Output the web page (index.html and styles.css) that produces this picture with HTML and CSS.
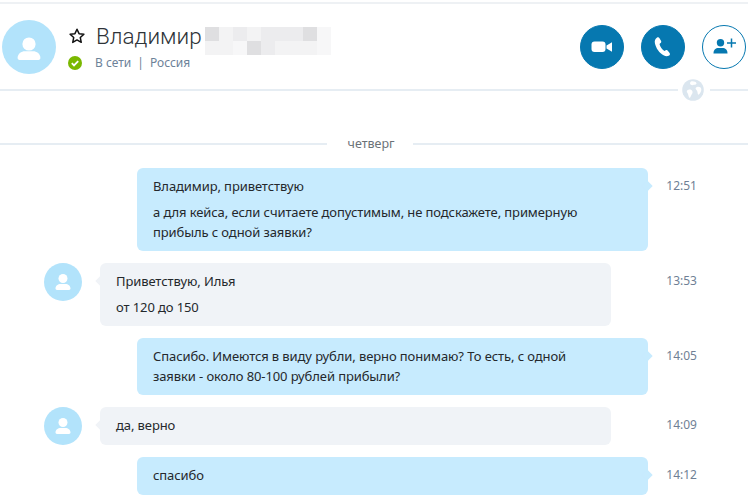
FILE: index.html
```html
<!DOCTYPE html>
<html lang="ru">
<head>
<meta charset="utf-8">
<title>Чат</title>
<link rel="stylesheet" href="styles.css">
</head>
<body>
<div class="page">
  <header class="head">
    <div class="avatar-big">
      <svg viewBox="0 0 54 54" width="54" height="54"><circle cx="27" cy="24" r="6.6" fill="#fff"/><path d="M17.5 40c-1.2 0-1.9-.8-1.9-1.9 0-4.6 3.6-6.9 7.4-6.9h8c3.800 0 7.400 2.300 7.400 6.900 0 1.100-.7 1.900-1.900 1.900z" fill="#fff"/></svg>
    </div>
    <div class="who">
      <div class="name-row">
        <svg class="star" viewBox="0 0 18 18" width="18" height="18"><path d="M9 2.200l2.050 4.450 4.850.6-3.600 3.300.95 4.800L9 12.950 4.750 15.350l.95-4.800-3.600-3.300 4.850-.6z" fill="none" stroke="#111" stroke-width="1.500" stroke-linejoin="round"/></svg>
        <span class="name">Владимир</span>
        <div class="blur">
          <i class="c2"></i><i class="c0"></i><i class="c1"></i><i class="c0"></i><i class="c1"></i><i class="c1"></i><i class="c1"></i><i class="c2"></i><i class="c3"></i>
          <i class="c0"></i><i class="c0"></i><i class="c3"></i><i class="c2"></i><i class="c1"></i><i class="c0"></i><i class="c0"></i><i class="c0"></i><i class="c3"></i>
        </div>
      </div>
      <div class="status-row">
        <svg class="ok" viewBox="0 0 14 14" width="14" height="14"><circle cx="7" cy="7" r="7" fill="#7ab800"/><path d="M3.800 7.200l2.200 2.200 4.200-4.300" fill="none" stroke="#fff" stroke-width="1.800"/></svg>
        <span class="status">В сети</span><span class="status bar">|</span><span class="status">Россия</span>
      </div>
    </div>
    <div class="actions">
      <button class="act fill" aria-label="Видео">
        <svg viewBox="0 0 24 24" width="24" height="24"><rect x="1.500" y="6.500" width="14" height="10.500" rx="3" fill="#fff"/><path d="M16.500 10.500l5.500-3.200v9.400l-5.500-3.200z" fill="#fff"/></svg>
      </button>
      <button class="act fill" aria-label="Звонок">
        <svg viewBox="0 0 24 24" width="24" height="24"><path d="M5.800 2.800c1-.7 2.100-.6 2.700.4l1.500 2.500c.5.900.3 1.800-.5 2.400l-1 .8c.5 2.700 2.700 5.900 5 7l1.200-.6c.9-.4 1.700-.2 2.300.6l1.600 2.100c.6.900.5 1.800-.4 2.400-1.500 1-3.400 1.200-5.200.1C8.300 18.200 4.900 13 3.900 8.200 3.400 6 4.200 3.900 5.800 2.800z" fill="#fff"/></svg>
      </button>
      <button class="act line" aria-label="Добавить">
        <svg viewBox="0 0 28 24" width="28" height="24"><circle cx="10.500" cy="7.800" r="3.700" fill="#0678b0"/><path d="M3.500 18.500c0-3.800 2.300-5.400 5-5.400h4c2.700 0 5 1.600 5 5.400z" fill="#0678b0"/><path d="M21.500 3.500v9M17 8h9" stroke="#0678b0" stroke-width="1.500" fill="none"/></svg>
      </button>
    </div>
  </header>
  <div class="rule">
    <svg class="globe" viewBox="0 0 22 22" width="22" height="22"><circle cx="11" cy="11" r="10.800" fill="#dbe6ef"/><path d="M9 2.500c2.500-.5 5 .4 5.500 1.700.3 1-1.300 1.700-2.600 1.500-1.200.8-3.500.5-3.800-.9-.1-.9.100-1.700.9-2.300zM15 8c1.800-.6 4 .2 4.300 2 .3 2-1 4.400-2.500 5.600-.9.300-1.200-1.400-1.300-2.600-.2-1.800-1.800-2.200-1.900-3.500 0-.7.700-1.200 1.400-1.500zM6.500 10.800c1.500-.6 3.400.1 3.900 1.400.5 1.200-.1 2.500-.8 3.400-.6 1.200-.9 2.700-1.800 3.300-1.200-.4-1.400-2.600-1.800-3.800-.4-1.200-1.300-1.700-1.200-2.800.1-.7 1-1.200 1.700-1.500z" fill="#fff"/></svg>
  </div>
  <div class="date"><span class="date-text">четверг</span></div>
  <section class="chat">
    <div class="row">
      <div class="bubble out">
        <p>Владимир, приветствую</p>
        <p>а для кейса, если считаете допустимым, не подскажете, примерную<br>прибыль с одной заявки?</p>
      </div>
      <time class="time">12:51</time>
    </div>
    <div class="row">
      <div class="avatar-small"><svg viewBox="0 0 38 38" width="38" height="38"><circle cx="19" cy="15.500" r="4.500" fill="#fff"/><path d="M13 27c-.9 0-1.500-.6-1.500-1.400 0-3.100 2.500-4.700 5-4.700h5c2.500 0 5 1.600 5 4.700 0 .8-.6 1.400-1.500 1.400z" fill="#fff"/></svg></div>
      <div class="bubble in">
        <p>Приветствую, Илья</p>
        <p>от 120 до 150</p>
      </div>
      <time class="time">13:53</time>
    </div>
    <div class="row">
      <div class="bubble out">
        <p>Спасибо. Имеются в виду рубли, верно понимаю? То есть, с одной<br>заявки - около 80-100 рублей прибыли?</p>
      </div>
      <time class="time">14:05</time>
    </div>
    <div class="row">
      <div class="avatar-small"><svg viewBox="0 0 38 38" width="38" height="38"><circle cx="19" cy="15.500" r="4.500" fill="#fff"/><path d="M13 27c-.9 0-1.500-.6-1.500-1.400 0-3.100 2.500-4.700 5-4.700h5c2.500 0 5 1.600 5 4.700 0 .8-.6 1.400-1.500 1.400z" fill="#fff"/></svg></div>
      <div class="bubble in">
        <p>да, верно</p>
      </div>
      <time class="time">14:09</time>
    </div>
    <div class="row">
      <div class="bubble out">
        <p>спасибо</p>
      </div>
      <time class="time">14:12</time>
    </div>
  </section>
</div>
</body>
</html>
```
FILE: styles.css
```css
* { box-sizing: border-box; }
html, body { margin: 0; height: 100%; background: #fff; overflow: hidden; }
.page {
  width: 748px;
  height: 504px;
  padding-top: 2px;
  font-family: "Noto Sans", "Open Sans", sans-serif;
  color: #24282c;
}
.head {
  height: 87px;
  border-top: 2px solid #eef1f4;
  display: flex;
  align-items: center;
  padding: 0 2px;
}
.avatar-big {
  width: 54px;
  height: 54px;
  border-radius: 50%;
  background: #b2e3fb;
  flex: none;
}
.who { margin-left: 12px; padding-top: 2px; }
.name-row { display: flex; align-items: center; height: 28px; }
.star { flex: none; }
.name {
  margin-left: 10px;
  width: 109px;
  flex: none;
  font-size: 22.500px;
  font-weight: 300;
  line-height: 28px;
  color: #2e3338;
  font-family: Roboto, "Open Sans", sans-serif;
}
.blur {
  display: grid;
  grid-template-columns: repeat(9, 14px);
  grid-auto-rows: 14px;
  width: 126px;
  margin-top: 5px;
  margin-bottom: -5px;
}
.c0 { background: #f3f3f4; }
.c1 { background: #ececee; }
.c2 { background: #dfdfe1; }
.c3 { background: #f7f7f8; }
.status-row { display: flex; align-items: center; height: 20px; margin-top: 3px; }
.ok { flex: none; margin-right: 13px; }
.status { font-size: 12px; color: #6d8299; line-height: 20px; }
.bar { margin: 0 6px; }
.actions { margin-left: auto; display: flex; gap: 17px; }
.act {
  width: 44px;
  height: 44px;
  border-radius: 50%;
  padding: 0;
  display: flex;
  align-items: center;
  justify-content: center;
  background: #fff;
  border: 1.500px solid #0678b0;
}
.fill { background: #0678b0; }
.rule {
  position: relative;
  height: 2px;
  background: linear-gradient(to right, #e6edf3 678px, #fff 678px, #fff 710px, #e6edf3 710px);
}
.globe { position: absolute; left: 682px; top: -10px; }
.date {
  margin-top: 52px;
  height: 2px;
  background: linear-gradient(to right, #e6edf3 327px, #fff 327px, #fff 413px, #e6edf3 413px);
  display: flex;
  justify-content: center;
  align-items: center;
}
.date-text { font-size: 12.500px; line-height: 18px; color: #6b7177; margin-left: -6px; }
.chat {
  margin-top: 23px;
  display: flex;
  flex-direction: column;
  gap: 12px;
}
.row {
  display: flex;
  align-items: flex-start;
  padding-right: 51px;
}
.bubble {
  position: relative;
  width: 511px;
  min-height: 38px;
  border-radius: 6px;
  padding: 8px 16px 9px;
  font-size: 13px;
  letter-spacing: -0.1px;
  line-height: 20px;
}
.bubble p { margin: 0; }
.bubble p + p { margin-top: 6px; }
.bubble::after {
  content: "";
  position: absolute;
  top: 14px;
  width: 8px;
  height: 8px;
  transform: rotate(45deg);
}
.out { margin-left: 137px; background: #c7ebfe; }
.out::after { right: -3px; background: #c7ebfe; }
.in { margin-left: 18px; background: #f0f3f7; }
.in::after { left: -3px; background: #f0f3f7; }
.avatar-small {
  width: 38px;
  height: 38px;
  margin-left: 44px;
  border-radius: 50%;
  background: #b2e3fb;
  flex: none;
}
.time {
  margin-left: auto;
  font-size: 12px;
  line-height: 20px;
  padding-top: 8px;
  color: #6f7f95;
}
```
